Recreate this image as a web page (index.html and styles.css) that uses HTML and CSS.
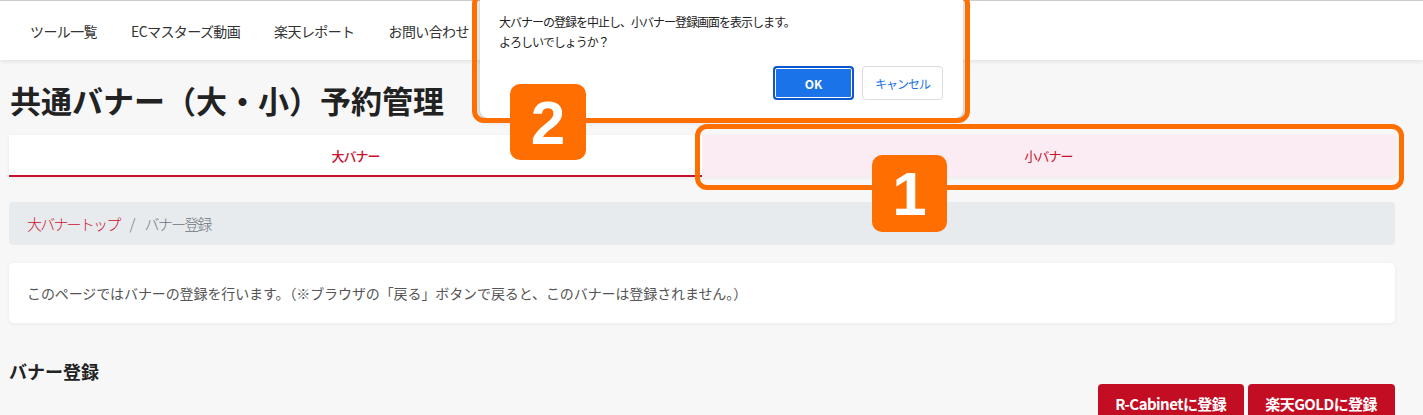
FILE: index.html
```html
<!DOCTYPE html>
<html lang="ja">
<head>
    <meta charset="UTF-8">
    <title>共通バナー（大・小）予約管理</title>
    <link rel="stylesheet" href="styles.css">
</head>
<body>
    <header class="site-nav">
        <a class="nav-link" href="#">ツール一覧</a>
        <a class="nav-link" href="#">ECマスターズ動画</a>
        <a class="nav-link" href="#">楽天レポート</a>
        <a class="nav-link" href="#">お問い合わせ</a>
    </header>

    <main class="container">
        <h1 class="page-title">共通バナー（大・小）予約管理</h1>

        <div class="tabs">
            <a class="tab active" href="#">大バナー</a>
            <a class="tab tab-alt" href="#">小バナー</a>
        </div>

        <nav class="breadcrumb">
            <a class="crumb-link" href="#">大バナートップ</a>
            <span class="crumb-sep">/</span>
            <span class="crumb-current">バナー登録</span>
        </nav>

        <div class="card notice">
            このページではバナーの登録を行います。（※ブラウザの「戻る」ボタンで戻ると、このバナーは登録されません。）
        </div>

        <h2 class="section-title">バナー登録</h2>

        <div class="actions">
            <button class="btn-red">R-Cabinetに登録</button>
            <button class="btn-red">楽天GOLDに登録</button>
        </div>
    </main>

    <!-- browser confirm dialog -->
    <div class="confirm-dialog">
        <p class="confirm-text">大バナーの登録を中止し、小バナー登録画面を表示します。<br>よろしいでしょうか？</p>
        <div class="confirm-buttons">
            <button class="confirm-ok">OK</button>
            <button class="confirm-cancel">キャンセル</button>
        </div>
    </div>

    <!-- annotations -->
    <div class="callout callout-dialog"></div>
    <div class="callout callout-tab"></div>
    <div class="badge badge-two">2</div>
    <div class="badge badge-one">1</div>
</body>
</html>
```

FILE: styles.css
```css
body {
    font-family: "Noto Sans CJK JP", "Noto Sans", sans-serif;
    background: #f7f7f7;
    color: #222;
    margin: 0;
    padding: 0;
    position: relative;
    height: 415px;
    overflow: hidden;
}
a {
    text-decoration: none;
}

/* top navigation */
.site-nav {
    background: #fff;
    border-top: 1px solid #ccc;
    height: 59px;
    display: flex;
    align-items: center;
    gap: 34px;
    padding-left: 30px;
    box-shadow: 0 2px 4px rgba(0,0,0,0.08);
}
.nav-link {
    color: #333;
    font-size: 14px;
    letter-spacing: -0.6px;
}

.container {
    margin: 0 28px 0 9px;
}
.page-title {
    font-size: 31px;
    font-weight: 700;
    line-height: 37px;
    margin: 21px 0 17px 1px;
    color: #222;
}

/* tabs */
.tabs {
    display: flex;
    box-shadow: 0 1px 4px rgba(0,0,0,0.06);
}
.tab {
    flex: 1;
    height: 40px;
    display: flex;
    align-items: center;
    justify-content: center;
    font-size: 13px;
    letter-spacing: -1px;
    color: #c8102e;
    background: #fff;
    border-bottom: 2px solid transparent;
}
.tab.active {
    font-weight: 500;
    border-bottom-color: #c8102e;
}
.tab-alt {
    background: #fbebf2;
}

/* breadcrumb */
.breadcrumb {
    margin-top: 25px;
    background: #e8ebee;
    border-radius: 4px;
    height: 43px;
    display: flex;
    align-items: center;
    padding: 0 18px;
    font-size: 15px;
    font-weight: 300;
    letter-spacing: -1.8px;
    color: #6c757d;
}
.crumb-link {
    color: #c8102e;
}
.crumb-sep {
    margin: 0 11px 0 10px;
}

.card {
    background: #fff;
    border-radius: 5px;
    box-shadow: 0 1px 4px rgba(0,0,0,0.06);
}
.notice {
    margin-top: 18px;
    height: 60px;
    display: flex;
    align-items: center;
    padding: 0 18px;
    font-size: 14px;
    letter-spacing: -0.1px;
    color: #555;
}

.section-title {
    font-size: 18px;
    font-weight: 700;
    line-height: 27px;
    margin: 35px 0 0 0;
}

.actions {
    display: flex;
    justify-content: flex-end;
    gap: 4px;
    margin-top: -1px;
}
.btn-red {
    font-family: "Noto Sans CJK JP", "Noto Sans", sans-serif;
    background: #c30d23;
    color: #fff;
    border: none;
    border-radius: 4px;
    height: 38px;
    padding: 0 18px 0 17px;
    font-size: 15px;
    font-weight: 700;
    letter-spacing: -0.55px;
}

/* confirm dialog */
.confirm-dialog {
    position: absolute;
    left: 480px;
    top: -10px;
    width: 483px;
    height: 128px;
    box-sizing: border-box;
    background: #fff;
    border-radius: 8px;
    box-shadow: 0 2px 6px rgba(0,0,0,0.3);
    padding: 22px 20px 0 19px;
}
.confirm-text {
    margin: 0;
    font-size: 12px;
    line-height: 20px;
    letter-spacing: -1px;
    color: #222;
}
.confirm-buttons {
    display: flex;
    justify-content: flex-end;
    gap: 8px;
    margin-top: 14px;
}
.confirm-ok,
.confirm-cancel {
    font-family: "Noto Sans CJK JP", "Noto Sans", sans-serif;
    width: 81px;
    height: 34px;
    border-radius: 4px;
    font-size: 12px;
}
.confirm-ok {
    background: #1a73e8;
    color: #fff;
    font-weight: 700;
    border: 2px solid #0b57d0;
    box-shadow: inset 0 0 0 1px #fff;
}
.confirm-cancel {
    background: #fff;
    color: #1a73e8;
    border: 1px solid #dadce0;
    letter-spacing: -1px;
}

/* orange annotation boxes */
.callout {
    position: absolute;
    box-sizing: border-box;
    border: 5px solid #ff6e00;
    border-radius: 12px;
}
.callout-dialog {
    left: 472px;
    top: -8px;
    width: 498px;
    height: 131px;
}
.callout-tab {
    left: 695px;
    top: 124px;
    width: 709px;
    height: 66px;
}
.badge {
    position: absolute;
    width: 76px;
    height: 76px;
    border-radius: 10px;
    background: #ff6e00;
    color: #fff;
    font-family: "Liberation Sans", Arial, sans-serif;
    font-weight: 700;
    font-size: 62px;
    display: flex;
    align-items: center;
    justify-content: center;
}
.badge-two {
    left: 510px;
    top: 84px;
}
.badge-one {
    left: 872px;
    top: 155px;
    width: 75px;
    height: 77px;
}
```
